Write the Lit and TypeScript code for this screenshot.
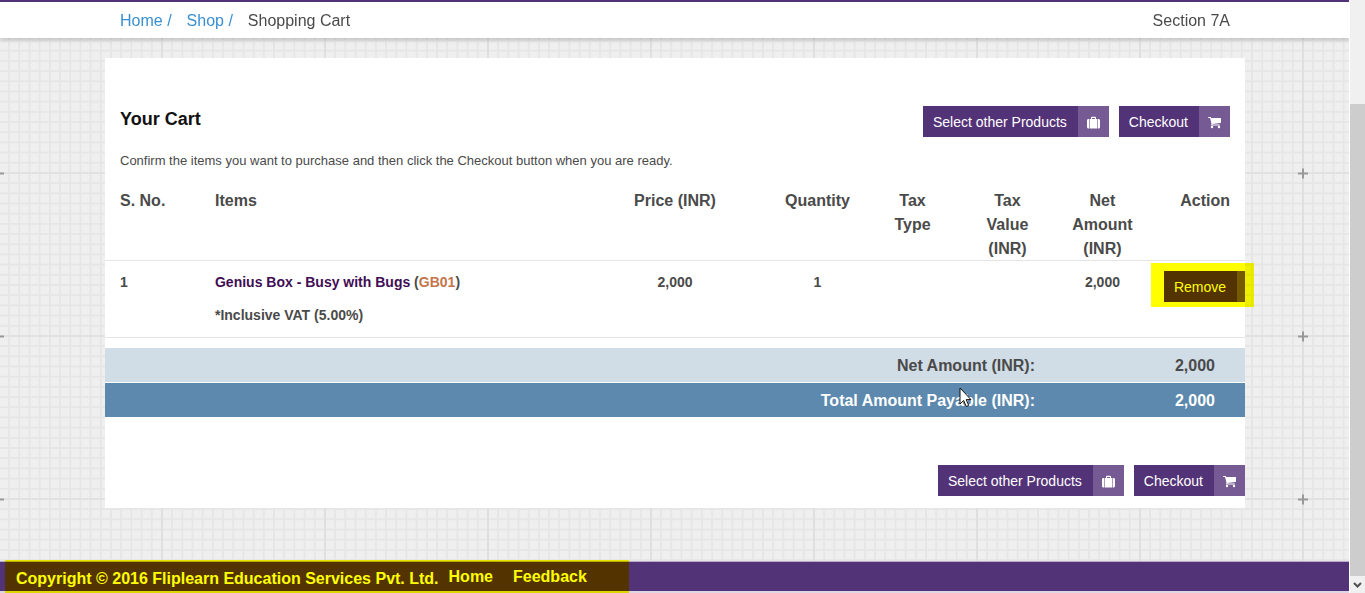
import { LitElement, html, svg, css } from "lit";
import { customElement, property } from "lit/decorators.js";

const caseIcon = svg`<path d="M4 3V1.900C4 1.200 4.500.8 5.200.8h2.600c.7 0 1.200.4 1.200 1.100V3h1.200v9.500H2.800V3zM5.100 3h2.800V1.900H5.100zM2.200 3v9.500h-.7C.6 12.500 0 11.900 0 11V4.500C0 3.600.6 3 1.500 3zM10.800 3h.7c.9 0 1.500.6 1.500 1.500V11c0 .9-.6 1.500-1.500 1.500h-.7z"/>`;
const cartIcon = svg`<path d="M0 1.500C0 1.200.2 1 .5 1h2c.5 0 .6.500.7 1h9.300c.3 0 .5.200.5.500v4c0 .3-.2.500-.4.500L4.400 7.900c.1.300.1.400 0 .600h7.100c.3 0 .5.200.5.500s-.2.500-.5.500h-8c-.3 0-.5-.2-.5-.5 0-.2.400-.8.500-1L2.100 2H.5C.2 2 0 1.800 0 1.500z"/><circle cx="4" cy="11" r="1.200"/><circle cx="11" cy="11" r="1.200"/>`;

@customElement("icon-button")
export class IconButton extends LitElement {
  @property() label = "";
  @property() icon = "";

  static styles = css`
    :host {
      display: inline-flex;
    }
    .button {
      display: flex;
      flex: none;
      padding: 0;
      border: 0;
      color: #fff;
      background: #533377;
      font: 14px/30px "Liberation Sans", Arial, sans-serif;
      white-space: nowrap;
      cursor: pointer;
    }
    .label {
      padding: 1px 11px 0 10px;
    }
    .tail {
      display: flex;
      align-items: center;
      justify-content: center;
      width: 31px;
      height: 31px;
      background: #765a94;
    }
    .glyph {
      width: 13px;
      height: 13px;
      margin-top: 2px;
      fill: #fff;
    }
  `;

  render() {
    const glyph = this.icon === "case" ? caseIcon : this.icon === "cart" ? cartIcon : "";
    return html`<button class="button" type="button">
      <span class="label">${this.label}</span>
      <span class="tail">
        ${glyph ? html`<svg class="glyph" viewBox="0 0 13 13" aria-hidden="true">${glyph}</svg>` : ""}
      </span>
    </button>`;
  }
}

@customElement("app-root")
export class AppRoot extends LitElement {
  static styles = css`
    :host {
      display: flex;
      min-height: 100vh;
      color: #4a4a4a;
      font: 16px/24px "Liberation Sans", Arial, sans-serif;
    }
    a {
      text-decoration: none;
    }
    .page {
      --tile: 163px;
      --cell: calc(var(--tile) / 16);
      position: relative;
      flex: 1;
      min-width: 0;
      display: flex;
      flex-direction: column;
      background-color: #efefef;
      background-image:
        linear-gradient(90deg, #dfdfdf 2px, transparent 2px),
        linear-gradient(#e1e1e1 2px, transparent 2px),
        linear-gradient(90deg, #e6e6e6 2px, transparent 2px),
        linear-gradient(#e6e6e6 2px, transparent 2px);
      background-size:
        var(--tile) var(--tile),
        var(--tile) var(--tile),
        var(--cell) var(--cell),
        var(--cell) var(--cell);
      background-position: -2px 9px;
    }
    .marks {
      position: absolute;
      inset: 0;
      width: 100%;
      height: 100%;
    }
    .bar {
      position: relative;
      border-top: 2px solid #533377;
      background: #fff;
      box-shadow: 0 1px 5px rgba(0, 0, 0, 0.25);
    }
    .wrap {
      box-sizing: border-box;
      width: 100%;
      max-width: 1140px;
      margin: 0 auto;
    }
    .crumbs {
      display: flex;
      gap: 15px;
      padding: 7px 15px 5px;
    }
    .crumbs a {
      color: #3a8fd0;
    }
    .section {
      margin-left: auto;
    }
    .main {
      flex: 1;
      padding: 20px 0 53px;
    }
    .card {
      position: relative;
      padding: 48px 0 12px;
      background: #fff;
    }
    .head {
      display: flex;
      justify-content: space-between;
      padding: 0 15px;
    }
    .title {
      margin: 0;
      color: #111;
      font-size: 18px;
      line-height: 26px;
    }
    .actions {
      display: flex;
      justify-content: flex-end;
      gap: 10px;
    }
    .actions.end {
      margin-top: 48px;
    }
    .note {
      margin: 14px 15px 18px;
      font-size: 13px;
      line-height: 20px;
    }
    .table {
      width: 100%;
      table-layout: fixed;
      border-collapse: separate;
      border-spacing: 0;
    }
    .one {
      width: 8.3333%;
    }
    .two {
      width: 16.6667%;
    }
    .four {
      width: 33.3333%;
    }
    .items th,
    .items td {
      padding: 0 15px;
      text-align: center;
      vertical-align: top;
      box-shadow: inset 0 -1px #e5e5e5;
    }
    .items td {
      padding: 10px 15px 1px;
      font-size: 14px;
      font-weight: bold;
      line-height: 23px;
    }
    .items .left {
      text-align: left;
    }
    .items .right {
      text-align: right;
    }
    .product {
      color: #3f0d54;
    }
    .code {
      color: #c4764a;
    }
    .vat {
      margin: 10px 0;
    }
    .items .action {
      position: relative;
      padding: 10px 0 0 14px;
    }
    .clip {
      display: flex;
      overflow: hidden;
    }
    .marker {
      position: absolute;
      background: #ff0;
      mix-blend-mode: multiply;
      pointer-events: none;
    }
    .action .marker {
      top: 2px;
      left: 1px;
      right: -9px;
      height: 44px;
    }
    .totals {
      margin-top: 10px;
      font-weight: bold;
    }
    .totals th,
    .totals td {
      padding: 6px 20px 4px;
      text-align: right;
    }
    .totals td {
      padding-right: 30px;
    }
    .net {
      background: #d0dce6;
    }
    .net th,
    .net td {
      border-bottom: 1px solid #fff;
    }
    .due {
      color: #fff;
      background: #5c89ad;
    }
    .due th {
      position: relative;
    }
    .pointer {
      position: absolute;
      top: 4px;
      right: 83px;
      width: 13px;
      height: 21px;
    }
    .footer {
      position: relative;
      display: flex;
      gap: 20px;
      padding: 3px 16px 0;
      border-top: 1px solid #b9adc9;
      border-bottom: 2px solid #ddd6e4;
      background: #533377;
      color: #fff;
      font-weight: bold;
    }
    .footer a {
      color: #fff;
    }
    .copy {
      margin: 2px -10px 0 0;
    }
    .footer .marker {
      top: -2px;
      bottom: -2px;
      left: 5px;
      width: 624px;
    }
    .scroll {
      position: relative;
      display: flex;
      flex-direction: column;
      width: 15px;
      background: #f0f0f0;
      box-shadow: -1px 0 #fff;
    }
    .track {
      height: 104px;
    }
    .thumb {
      flex: 1;
      background: #cdcdcd;
    }
    .arrow {
      width: 15px;
      height: 17px;
      fill: none;
      stroke: #505050;
      stroke-width: 2;
    }
  `;

  private cartActions(cls: string) {
    return html`<div class=${cls}>
      <icon-button label="Select other Products" icon="case"></icon-button>
      <icon-button label="Checkout" icon="cart"></icon-button>
    </div>`;
  }

  render() {
    return html`
      <div class="page">
        <svg class="marks" aria-hidden="true">
          <defs>
            <pattern id="plus" x="-9" y="165" width="163" height="163" patternUnits="userSpaceOnUse">
              <path d="M3 7.500h10v2H3zM7 3.500h2v10H7z" fill="#999" />
            </pattern>
          </defs>
          <rect width="100%" height="100%" fill="url(#plus)" />
        </svg>
        <header class="bar">
          <nav class="wrap crumbs" aria-label="Breadcrumb">
            <a href="#">Home /</a>
            <a href="#">Shop /</a>
            <span>Shopping Cart</span>
            <span class="section">Section 7A</span>
          </nav>
        </header>
        <main class="main">
          <section class="wrap card">
            <div class="head">
              <h1 class="title">Your Cart</h1>
              ${this.cartActions("actions")}
            </div>
            <p class="note">
              Confirm the items you want to purchase and then click the Checkout button when you are ready.
            </p>
            <table class="table items">
              <colgroup>
                <col class="one" /><col class="four" /><col class="two" /><col class="one" />
                <col class="one" /><col class="one" /><col class="one" /><col class="one" />
              </colgroup>
              <thead>
                <tr>
                  <th class="left">S. No.</th>
                  <th class="left">Items</th>
                  <th>Price (INR)</th>
                  <th>Quantity</th>
                  <th>Tax Type</th>
                  <th>Tax Value (INR)</th>
                  <th>Net Amount (INR)</th>
                  <th class="right">Action</th>
                </tr>
              </thead>
              <tbody>
                <tr>
                  <td class="left">1</td>
                  <td class="left">
                    <a class="product" href="#">Genius Box - Busy with Bugs</a>
                    (<span class="code">GB01</span>)
                    <p class="vat">*Inclusive VAT (5.00%)</p>
                  </td>
                  <td>2,000</td>
                  <td>1</td>
                  <td></td>
                  <td></td>
                  <td>2,000</td>
                  <td class="action">
                    <div class="clip"><icon-button label="Remove"></icon-button></div>
                    <div class="marker"></div>
                  </td>
                </tr>
              </tbody>
            </table>
            <table class="table totals">
              <colgroup><col /><col class="two" /></colgroup>
              <tbody>
                <tr class="net">
                  <th scope="row">Net Amount (INR):</th>
                  <td>2,000</td>
                </tr>
                <tr class="due">
                  <th scope="row">
                    Total Amount Payable (INR):
                    <svg class="pointer" viewBox="0 0 13 21" aria-hidden="true">
                      <path d="M1 1v16l3.700-3.500 2.500 6 2.500-1.100-2.500-5.800H12z" fill="#fff" stroke="#111" />
                    </svg>
                  </th>
                  <td>2,000</td>
                </tr>
              </tbody>
            </table>
            ${this.cartActions("actions end")}
          </section>
        </main>
        <footer class="footer">
          <p class="copy">Copyright © 2016 Fliplearn Education Services Pvt. Ltd.</p>
          <a href="#">Home</a>
          <a href="#">Feedback</a>
          <div class="marker"></div>
        </footer>
      </div>
      <div class="scroll" aria-hidden="true">
        <div class="track"></div>
        <div class="thumb"></div>
        <svg class="arrow" viewBox="0 0 15 17"><path d="M4 7l3.500 3.500L11 7" /></svg>
      </div>
    `;
  }
}
